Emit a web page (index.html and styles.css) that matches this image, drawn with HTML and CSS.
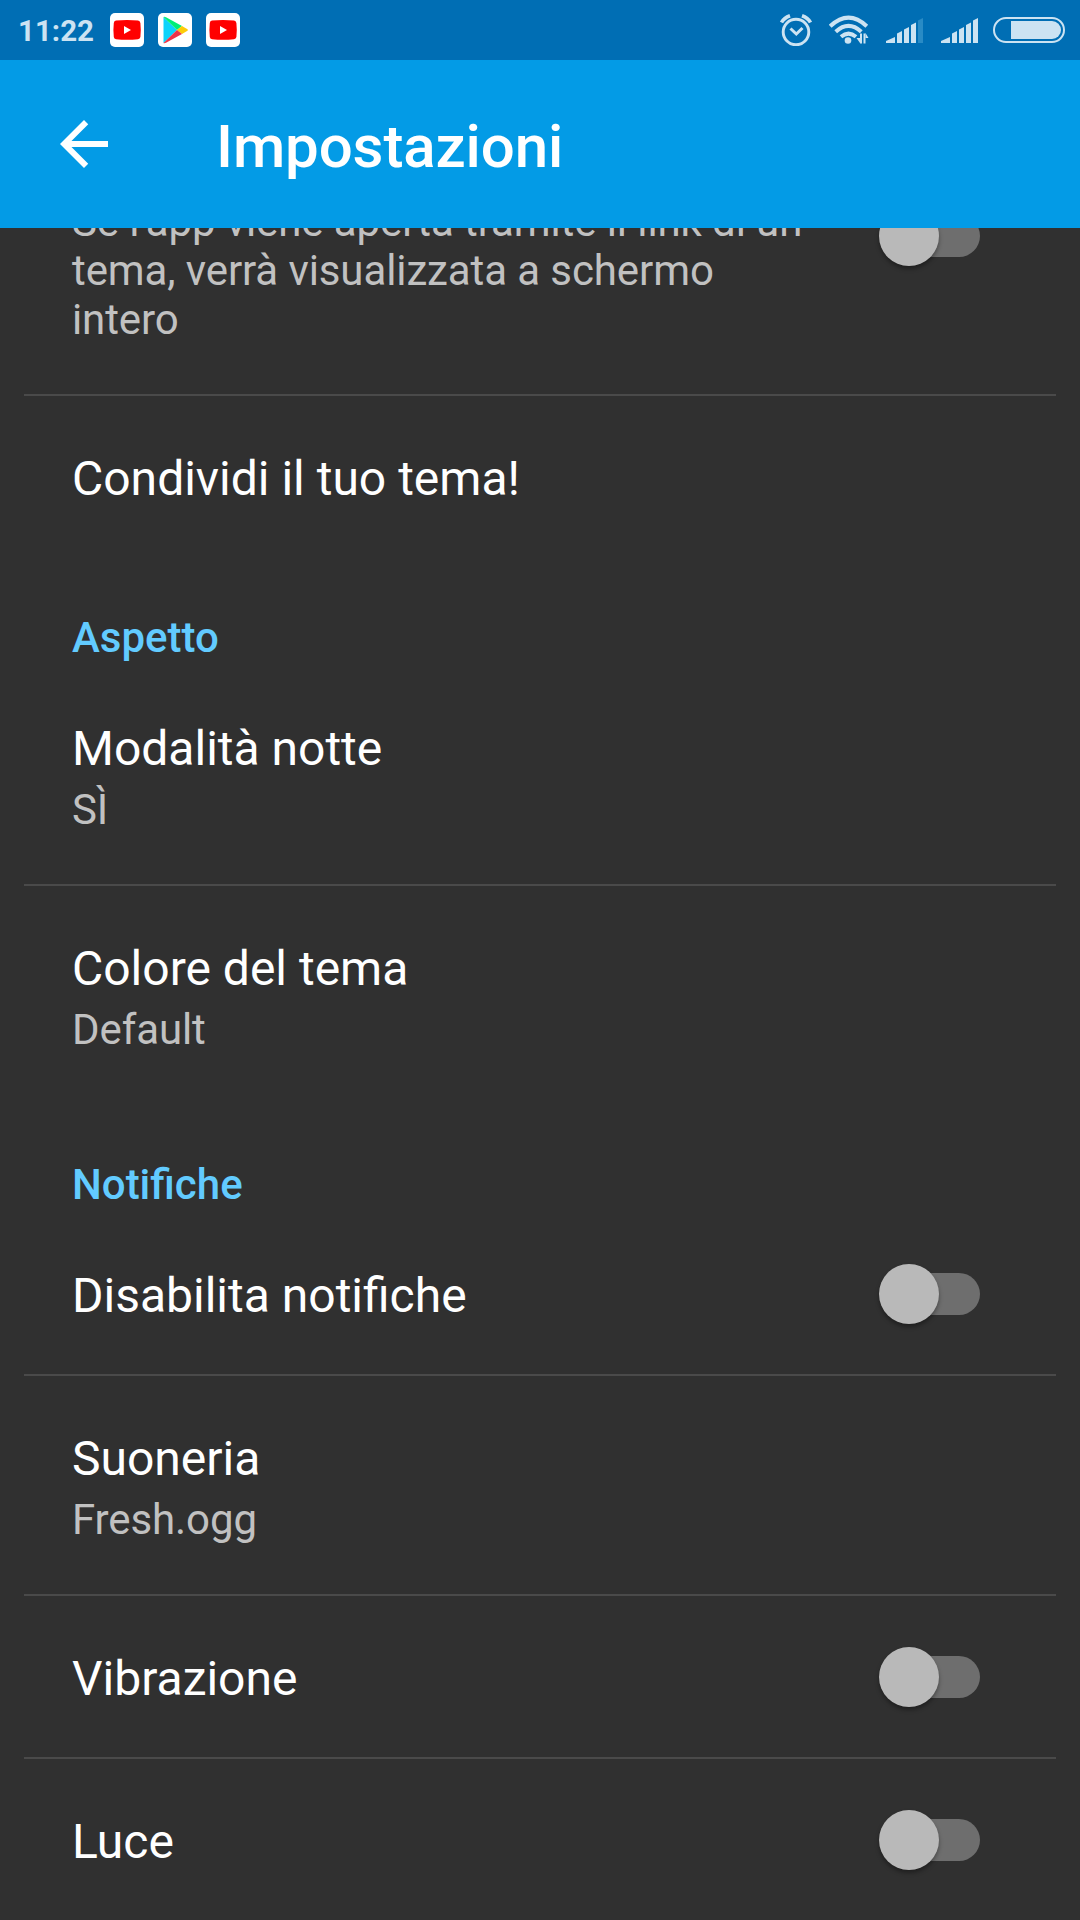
FILE: index.html
```html
<!DOCTYPE html>
<html lang="it">
<head>
  <meta charset="UTF-8">
  <meta name="viewport" content="width=device-width, initial-scale=1.0">
  <title>Impostazioni</title>
  <link rel="stylesheet" href="styles.css">
</head>
<body>
  <div class="status-bar">
    <div class="status-left">
      <span class="time">11:22</span>
      <svg class="app-icon" viewBox="0 0 34 34">
        <rect width="34" height="34" rx="5" fill="#fff"/>
        <path d="M6 7.600Q17 6.600 28 7.600Q30 7.800 30.400 10Q31.200 17 30.400 24Q30 26 28 26.200Q17 27.200 6 26.200Q4 26 3.800 24Q3 17 3.800 10Q4 7.800 6 7.600z" fill="#f00"/>
        <path d="M14 13v8l7-4z" fill="#fff"/>
      </svg>
      <svg class="app-icon" viewBox="0 0 34 34">
        <rect width="34" height="34" rx="5" fill="#fff"/>
        <path d="M5.500 4v26L19 17z" fill="#0cd3fb"/>
        <path d="M5.500 4Q6.500 3.500 8 4.300L24 13l-5 4z" fill="#00ee76"/>
        <path d="M24 13l5.500 3.200q.8.800 0 1.500L24 21l-5-4z" fill="#fdcb08"/>
        <path d="M5.500 30Q6.500 30.500 8 29.700L24 21l-5-4z" fill="#ee3448"/>
      </svg>
      <svg class="app-icon" viewBox="0 0 34 34">
        <rect width="34" height="34" rx="5" fill="#fff"/>
        <path d="M6 7.600Q17 6.600 28 7.600Q30 7.800 30.400 10Q31.200 17 30.400 24Q30 26 28 26.200Q17 27.200 6 26.200Q4 26 3.800 24Q3 17 3.800 10Q4 7.800 6 7.600z" fill="#f00"/>
        <path d="M14 13v8l7-4z" fill="#fff"/>
      </svg>
    </div>
    <div class="status-right">
      <svg class="alarm" viewBox="0 0 32 32" fill="none" stroke="#cce3f2">
        <circle cx="16" cy="18" r="12.800" stroke-width="2.900"/>
        <path d="M1.500 8.500Q4 4 10 1.800M30.500 8.500Q28 4 22 1.800" stroke-width="3.600"/>
        <path d="M10.500 14.500L16.300 20l6.200-6" stroke-width="3"/>
      </svg>
      <svg class="wifi" viewBox="0 0 40 30" fill="none" stroke="#cce3f2">
        <path d="M1.200 11.200Q19.500-6 37.800 11.200M6.700 16.700Q19.500 5 32.300 16.700M12 21.700Q19.500 15.500 27 21.700" stroke-width="4"/>
        <circle cx="19" cy="25.500" r="3.300" fill="#cce3f2" stroke="none"/>
        <path d="M31 18.500V28.500h2V18.500zM34.500 18.500V28.500h2V18.500z" fill="#cce3f2" stroke="none"/>
        <path d="M27.500 23h3.500v5zM39.500 23h-3v-5z" fill="#cce3f2" stroke="none"/>
      </svg>
      <svg class="signal" viewBox="0 0 37 25" fill="#cce3f2">
        <path d="M0 25v-2l9-4v6zM11 15.500l5-2.500v12h-5zM18 11.500L23 9v16h-5zM25 7l5-2.500V25h-5z"/>
        <path d="M32 2.500L37 0v25h-5z" fill="#298bc5"/>
      </svg>
      <svg class="signal" viewBox="0 0 37 25" fill="#cce3f2">
        <path d="M0 25v-2l9-4v6zM11 15.500l5-2.500v12h-5zM18 11.500L23 9v16h-5zM25 7l5-2.500V25h-5zM32 2.500L37 0v25h-5z"/>
      </svg>
      <svg class="battery" viewBox="0 0 72 26">
        <rect x="1" y="1" width="70" height="24" rx="12" fill="none" stroke="#cce3f2" stroke-width="2"/>
        <path d="M18 4h41a9 9 0 0 1 0 18H18z" fill="#cce3f2"/>
      </svg>
    </div>
  </div>

  <header class="toolbar">
    <svg class="back" viewBox="0 0 24 24" fill="#fff">
      <path d="M20 11H7.830l5.590-5.590L12 4l-8 8 8 8 1.410-1.410L7.830 13H20v-2z"/>
    </svg>
    <h1>Impostazioni</h1>
  </header>

  <main class="list">
    <div class="row scrolled">
      <div class="summary">Se l'app viene aperta tramite il link di un tema, verrà visualizzata a schermo intero</div>
      <span class="switch"></span>
    </div>
    <div class="row divided">
      <div class="title">Condividi il tuo tema!</div>
    </div>

    <h2>Aspetto</h2>
    <div class="row">
      <div>
        <div class="title">Modalità notte</div>
        <div class="summary">SÌ</div>
      </div>
    </div>
    <div class="row divided">
      <div>
        <div class="title">Colore del tema</div>
        <div class="summary">Default</div>
      </div>
    </div>

    <h2>Notifiche</h2>
    <div class="row">
      <div class="title">Disabilita notifiche</div>
      <span class="switch"></span>
    </div>
    <div class="row divided">
      <div>
        <div class="title">Suoneria</div>
        <div class="summary">Fresh.ogg</div>
      </div>
    </div>
    <div class="row divided">
      <div class="title">Vibrazione</div>
      <span class="switch"></span>
    </div>
    <div class="row divided">
      <div class="title">Luce</div>
      <span class="switch"></span>
    </div>
  </main>
</body>
</html>
```

FILE: styles.css
```css
* {
  box-sizing: border-box;
}
body {
  margin: 0;
  height: 1920px;
  display: flex;
  flex-direction: column;
  overflow: hidden;
  background-color: #303030;
  color: #fff;
  font-family: Roboto, sans-serif;
}
svg {
  display: block;
  flex: none;
}

.status-bar {
  flex: none;
  height: 60px;
  display: flex;
  justify-content: space-between;
  align-items: center;
  padding: 0 15px 0 18px;
  background-color: #006eb4;
}
.status-left {
  display: flex;
  align-items: center;
  gap: 14px;
}
.time {
  width: 78px;
  padding-top: 1px;
  font-size: 29.5px;
  line-height: 36px;
  font-weight: 700;
  color: #cce3f2;
}
.app-icon {
  width: 34px;
  height: 34px;
}
.status-right {
  display: flex;
  align-items: center;
}
.alarm {
  width: 32px;
  height: 32px;
  margin-right: 17px;
}
.wifi {
  width: 40px;
  height: 30px;
  margin-right: 17px;
}
.signal {
  width: 37px;
  height: 25px;
  margin-right: 18px;
}
.battery {
  width: 72px;
  height: 26px;
  margin-left: -3px;
}

.toolbar {
  flex: none;
  height: 168px;
  display: flex;
  align-items: center;
  gap: 96px;
  padding-left: 48px;
  background-color: #039be6;
}
.back {
  width: 72px;
  height: 72px;
}
h1 {
  margin: 6px 0 0;
  font-size: 60px;
  line-height: 70px;
  font-weight: 500;
  letter-spacing: -0.1px;
}

.list {
  flex: 1;
  overflow: hidden;
}
h2 {
  margin: 0;
  padding: 56px 72px 4px;
  font-size: 42px;
  line-height: 49px;
  font-weight: 500;
  color: #62cbff;
}
.row {
  display: flex;
  justify-content: space-between;
  align-items: flex-start;
  margin: 0 24px;
  padding: 55px 76px 50px 48px;
  border-top: 0 solid #4a4a4a;
}
.row.divided {
  border-top-width: 2px;
}
.row.scrolled {
  margin-top: -31px;
  padding-top: 0;
}
.title {
  font-size: 48px;
  line-height: 56px;
}
.summary {
  max-width: 744px;
  font-size: 42px;
  line-height: 49px;
  letter-spacing: -0.1px;
  color: #c1c1c1;
}
.title + .summary {
  margin-top: 8px;
}

.switch {
  position: relative;
  flex: none;
  width: 102px;
  height: 60px;
  margin: -5px 0;
}
.scrolled .switch {
  margin-top: 8px;
}
.switch::before {
  content: "";
  position: absolute;
  left: 12px;
  right: 0;
  top: 10px;
  height: 42px;
  border-radius: 21px;
  background-color: #6e6e6e;
}
.switch::after {
  content: "";
  position: absolute;
  left: 0.5px;
  top: 0.5px;
  width: 60px;
  height: 60px;
  border-radius: 50%;
  background-color: #b9b9b9;
  box-shadow: 0 3px 4px rgba(0, 0, 0, 0.35);
}
```
